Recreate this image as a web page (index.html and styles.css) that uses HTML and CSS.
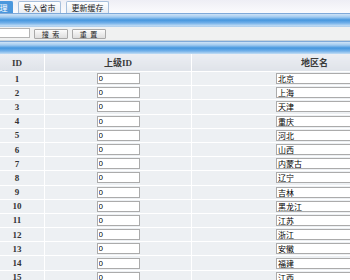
FILE: index.html
```html
<!DOCTYPE html>
<html lang="zh-CN">
<head>
    <meta charset="UTF-8">
    <title>省市管理</title>
    <link rel="stylesheet" href="styles.css">
</head>
<body>
    <div class="page">
        <div class="tabs">
            <span class="tab active">省市管理</span>
            <span class="tab">导入省市</span>
            <span class="tab">更新缓存</span>
        </div>
        <div class="bar"></div>
        <div class="search">
            <input type="text" class="kw">
            <button type="button" class="btn">搜 索</button>
            <button type="button" class="btn">重 置</button>
        </div>
        <div class="bar short"></div>
        <table class="grid">
            <thead>
                <tr><th class="c-id">ID</th><th class="c-pid">上级ID</th><th class="c-name">地区名</th></tr>
            </thead>
            <tbody>
                <tr><td class="num">1</td><td><input class="pid" value="0"></td><td><input class="name" value="北京"></td></tr>
                <tr><td class="num">2</td><td><input class="pid" value="0"></td><td><input class="name" value="上海"></td></tr>
                <tr><td class="num">3</td><td><input class="pid" value="0"></td><td><input class="name" value="天津"></td></tr>
                <tr><td class="num">4</td><td><input class="pid" value="0"></td><td><input class="name" value="重庆"></td></tr>
                <tr><td class="num">5</td><td><input class="pid" value="0"></td><td><input class="name" value="河北"></td></tr>
                <tr><td class="num">6</td><td><input class="pid" value="0"></td><td><input class="name" value="山西"></td></tr>
                <tr><td class="num">7</td><td><input class="pid" value="0"></td><td><input class="name" value="内蒙古"></td></tr>
                <tr><td class="num">8</td><td><input class="pid" value="0"></td><td><input class="name" value="辽宁"></td></tr>
                <tr><td class="num">9</td><td><input class="pid" value="0"></td><td><input class="name" value="吉林"></td></tr>
                <tr><td class="num">10</td><td><input class="pid" value="0"></td><td><input class="name" value="黑龙江"></td></tr>
                <tr><td class="num">11</td><td><input class="pid" value="0"></td><td><input class="name" value="江苏"></td></tr>
                <tr><td class="num">12</td><td><input class="pid" value="0"></td><td><input class="name" value="浙江"></td></tr>
                <tr><td class="num">13</td><td><input class="pid" value="0"></td><td><input class="name" value="安徽"></td></tr>
                <tr><td class="num">14</td><td><input class="pid" value="0"></td><td><input class="name" value="福建"></td></tr>
                <tr><td class="num">15</td><td><input class="pid" value="0"></td><td><input class="name" value="江西"></td></tr>
            </tbody>
        </table>
    </div>
</body>
</html>
```

FILE: styles.css
```css
body {
    margin: 0;
    background-color: #fff;
    font-family: "Liberation Sans", "Noto Sans CJK SC", sans-serif;
    font-size: 10px;
    color: #222;
    overflow: hidden;
}
.page {
    width: 460px;
}
.tabs {
    display: flex;
    align-items: flex-end;
    gap: 5px;
    height: 13px;
    margin-left: -30px;
    background: linear-gradient(#eeeef5, #fbfbfd);
}
.tab {
    box-sizing: border-box;
    width: 43px;
    height: 12px;
    border: 1px solid #a7bfdc;
    border-bottom: none;
    border-radius: 2px 2px 0 0;
    background: linear-gradient(#ffffff, #e9edf3);
    font-family: "Noto Sans CJK SC", sans-serif;
    font-size: 8px;
    line-height: 11px;
    text-align: center;
    color: #1a1a1a;
}
.tab.active {
    background: #4a97dd;
    border-color: #4a97dd;
    color: #fff;
}
.bar {
    height: 14px;
    background: linear-gradient(#7fa9d9 0, #7fa9d9 1px, #cfe3f6 1px, #a2cbf0 4px, #4596de 7px, #72b0e9 10px, #c4def5 13px, #9fc3e6 14px);
}
.bar.short {
    height: 13px;
}
.search {
    display: flex;
    align-items: center;
    gap: 4px;
    height: 14px;
    background-color: #f0f1f1;
    border-bottom: 1px solid #c9d3da;
    box-sizing: border-box;
}
.kw {
    box-sizing: border-box;
    width: 60px;
    height: 10px;
    margin: -1px 0 0 -30px;
    padding: 0;
    border: 1px solid #b4b4b4;
    background-color: #fff;
}
.btn {
    box-sizing: border-box;
    width: 34px;
    height: 10px;
    padding: 0;
    border: 1px solid #a9a9a9;
    border-radius: 1px;
    background: linear-gradient(#fbfbfb, #dedede);
    font-family: "Noto Sans CJK SC", sans-serif;
    font-size: 7px;
    line-height: 8px;
    letter-spacing: 1px;
    color: #222;
}
.grid {
    margin-left: -10px;
    width: 445px;
    table-layout: fixed;
    border-collapse: collapse;
    border-spacing: 0;
}
.c-id { width: 54px; }
.c-pid { width: 146px; }
.c-name { width: 245px; }
.grid th {
    height: 17px;
    padding: 0;
    background: linear-gradient(#eceef3, #dfe3e9);
    border-right: 1px solid #fff;
    border-bottom: 1px solid #fff;
    font-family: "Liberation Serif", "Noto Sans CJK SC", serif;
    font-size: 9px;
    font-weight: bold;
    color: #3a3a3a;
}
.grid td {
    height: 13.2px;
    padding: 0;
    background-color: #edf0f3;
    border-right: 1px solid #fff;
    border-bottom: 1px solid #fff;
    text-align: center;
    vertical-align: middle;
}
.num {
    font-family: "Liberation Serif", serif;
    font-weight: bold;
    font-size: 9px;
    color: #333;
}
.pid, .name {
    box-sizing: border-box;
    display: block;
    margin: 0 auto;
    height: 11px;
    padding: 0 1px;
    border: 1px solid #ababab;
    background-color: #fff;
    font-family: "Liberation Sans", "Noto Sans CJK SC", sans-serif;
    font-size: 8px;
    line-height: 9px;
    color: #000;
}
.pid { width: 43px; }
.name { width: 77px; }
```
